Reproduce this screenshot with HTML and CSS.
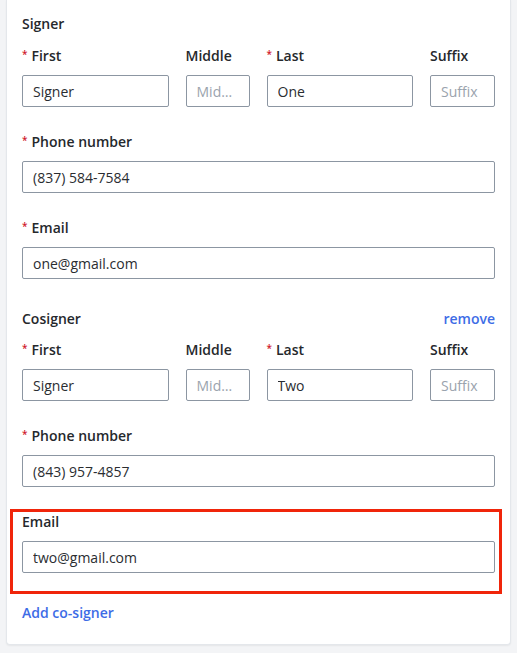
FILE: index.html
```html
<!DOCTYPE html>
<html lang="en">
<head>
<meta charset="utf-8">
<title>Signers</title>
<link rel="stylesheet" href="styles.css">
</head>
<body>
<div class="card">
  <div class="section-head"><span class="section-title">Signer</span></div>
  <div class="name-row">
    <div class="field"><label class="label"><span class="req">*</span>First</label><input class="input" value="Signer"></div>
    <div class="field"><label class="label">Middle</label><input class="input" placeholder="Middle"></div>
    <div class="field"><label class="label"><span class="req">*</span>Last</label><input class="input" value="One"></div>
    <div class="field"><label class="label">Suffix</label><input class="input" placeholder="Suffix"></div>
  </div>
  <div class="field group"><label class="label"><span class="req">*</span>Phone number</label><input class="input" value="(837) 584-7584"></div>
  <div class="field group"><label class="label"><span class="req">*</span>Email</label><input class="input" value="one@gmail.com"></div>

  <div class="section-head second"><span class="section-title">Cosigner</span><a class="link" href="#">remove</a></div>
  <div class="name-row">
    <div class="field"><label class="label"><span class="req">*</span>First</label><input class="input" value="Signer"></div>
    <div class="field"><label class="label">Middle</label><input class="input" placeholder="Middle"></div>
    <div class="field"><label class="label"><span class="req">*</span>Last</label><input class="input" value="Two"></div>
    <div class="field"><label class="label">Suffix</label><input class="input" placeholder="Suffix"></div>
  </div>
  <div class="field group"><label class="label"><span class="req">*</span>Phone number</label><input class="input" value="(843) 957-4857"></div>
  <div class="field group highlighted"><label class="label">Email</label><input class="input" value="two@gmail.com"><div class="highlight"></div></div>

  <a class="link add" href="#">Add co-signer</a>
</div>
</body>
</html>
```

FILE: styles.css
```css
* { box-sizing: border-box; }
html, body { margin: 0; padding: 0; }
body {
  background: #f3f4f6;
  font-family: "Open Sans", "Liberation Sans", sans-serif;
  font-size: 14px;
  color: #222529;
  width: 517px;
  height: 653px;
  overflow: hidden;
}
.card {
  margin: 0 6px;
  width: 505px;
  background: #ffffff;
  border: 1px solid #e4e7eb;
  border-top: none;
  border-radius: 0 0 4px 4px;
  box-shadow: 0 1px 2px rgba(0, 0, 0, 0.06);
  padding: 14px 15px 21px 15px;
  display: flex;
  flex-direction: column;
}
.section-head {
  display: flex;
  justify-content: space-between;
  align-items: center;
  line-height: 20px;
  height: 20px;
  margin-bottom: 12px;
}
.section-head.second {
  margin-top: 30px;
  margin-bottom: 11px;
}
.section-title { font-weight: 600; color: #25282c; }
.link {
  color: #3d6ce6;
  font-weight: 600;
  text-decoration: none;
  line-height: 20px;
}
.name-row {
  display: grid;
  grid-template-columns: 1fr 64px 1fr 65px;
  column-gap: 17px;
}
.field {
  display: flex;
  flex-direction: column;
  gap: 9px;
  min-width: 0;
}
.field.group { margin-top: 25px; }
.label {
  display: block;
  font-weight: 600;
  line-height: 20px;
  height: 20px;
  white-space: nowrap;
  color: #25282c;
  overflow: visible;
}
.req {
  color: #d0192b;
  font-size: 10px;
  line-height: 10px;
  font-weight: 600;
  position: relative;
  top: -3px;
  margin-right: 4px;
}
.input {
  width: 100%;
  height: 32px;
  border: 1px solid #8c96a2;
  border-radius: 2px;
  padding: 0 10px;
  font-family: "Open Sans", "Liberation Sans", sans-serif;
  font-size: 14px;
  color: #2a2d31;
  background: #fff;
  outline: none;
  text-overflow: ellipsis;
}
.input::placeholder { color: #9aa3ad; opacity: 1; }
.highlighted { position: relative; }
.highlight {
  position: absolute;
  top: -3px;
  left: -12px;
  right: -7px;
  bottom: -21px;
  border: 3px solid #f0250a;
  pointer-events: none;
}
.add {
  margin-top: 30px;
  align-self: flex-start;
}
```
